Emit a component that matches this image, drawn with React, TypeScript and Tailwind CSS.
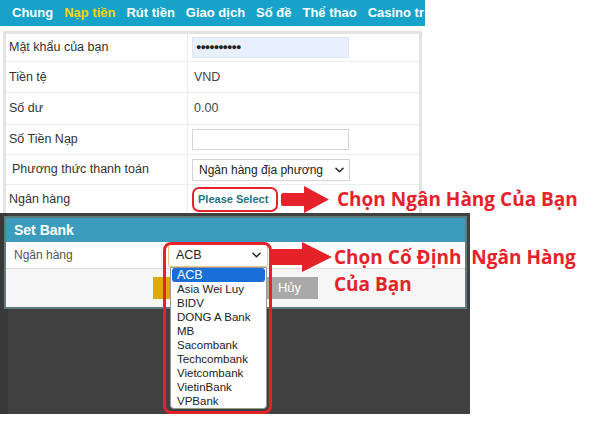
import React from "react";

const RED = "#e5222a";

function Chevron({ className }: { className?: string }) {
  return (
    <svg viewBox="0 0 10 6" className={className} fill="none">
      <path d="M1 1l4 4 4-4" stroke="#222" strokeWidth="1.6" strokeLinecap="round" strokeLinejoin="round" />
    </svg>
  );
}

function Row({ label, h, children, indent }: { label: string; h: string; children?: React.ReactNode; indent?: boolean }) {
  return (
    <div className={`flex border-b border-[#eeeeee] ${h}`}>
      <div className={`w-[182px] shrink-0 flex items-center border-r border-[#eeeeee] text-[12.5px] text-[#333] ${indent ? "pl-[6px]" : "pl-[3px]"}`}>
        {label}
      </div>
      <div className="flex items-center pl-[4px] text-[12.5px] text-[#444]">{children}</div>
    </div>
  );
}

export default function App() {
  const banks = ["ACB", "Asia Wei Luy", "BIDV", "DONG A Bank", "MB", "Sacombank", "Techcombank", "Vietcombank", "VietinBank", "VPBank"];
  return (
    <div className="relative w-[600px] h-[427px] overflow-hidden bg-white font-['Liberation_Sans',Arial,sans-serif]">
      {/* nav */}
      <div className="flex h-[26px] w-[425px] items-center gap-[11px] overflow-hidden whitespace-nowrap bg-[#17a2c9] pl-[12px] text-[13px] font-bold text-white">
        <span>Chung</span>
        <span className="text-[#ffd400]">Nạp tiền</span>
        <span>Rút tiền</span>
        <span>Giao dịch</span>
        <span>Số đề</span>
        <span>Thể thao</span>
        <span>Casino tr</span>
      </div>

      {/* form panel */}
      <div className="ml-[3px] mt-[5px] w-[419px] border-[3px] border-b-0 border-[#e3e3e3]">
        <Row label="Mật khẩu của bạn" h="h-[28px]">
          <div className="flex h-[21px] w-[157px] items-center border border-[#dfe6f0] bg-[#e8f0fe] pl-[3px] text-[9px] tracking-[-1px] text-[#222]">
            ●●●●●●●●●●
          </div>
        </Row>
        <Row label="Tiền tệ" h="h-[31px]">
          <span className="pl-[2px]">VND</span>
        </Row>
        <Row label="Số dư" h="h-[32px]">
          <span className="pl-[2px]">0.00</span>
        </Row>
        <Row label="Số Tiền Nạp" h="h-[30px]">
          <div className="h-[21px] w-[157px] border border-[#d4d4d4] bg-white" />
        </Row>
        <Row label="Phương thức thanh toán" h="h-[30px]" indent>
          <div className="flex h-[22px] w-[158px] items-center justify-between border border-[#d4d4d4] bg-white pl-[6px] pr-[5px] text-[12px] text-[#222]">
            <span>Ngân hàng địa phương</span>
            <Chevron className="h-[6px] w-[9px]" />
          </div>
        </Row>
        <div className="flex h-[28px]">
          <div className="flex w-[182px] shrink-0 items-center border-r border-[#eeeeee] pl-[3px] text-[12.5px] text-[#333]">Ngân hàng</div>
          <div className="flex items-center pl-[10px] text-[11px] font-bold text-[#1d7585]">Please Select</div>
        </div>
      </div>

      {/* dark overlay with modal */}
      <div className="h-[201px] w-[470px] bg-[linear-gradient(to_right,#393939_8px,#414141_8px)] pl-[4px] pt-[3px]">
        <div className="w-[463px] border-2 border-[#5f7b7d] bg-white">
          <div className="flex h-[24px] items-center bg-[#3b9cbd] pl-[8px] text-[14px] font-bold text-white">Set Bank</div>
          <div className="flex h-[27px] border-b border-[#dcdcdc]">
            <div className="flex w-[156px] shrink-0 items-center border-r border-[#e8e8e8] pl-[8px] text-[12px] text-[#555]">Ngân hàng</div>
            <div className="relative flex items-center pl-[6px]">
              <div className="flex h-[24px] w-[100px] items-center justify-between rounded-[2px] border border-[#e9c982] bg-white pl-[7px] pr-[6px] text-[12.5px] text-[#222]">
                <span>ACB</span>
                <Chevron className="h-[6px] w-[9px]" />
              </div>
              <div className="absolute left-[8px] top-[25px] z-10 w-[97px] rounded-b-[4px] border border-[#9a9a9a] bg-white px-[1px] text-[11.5px] leading-[14px] text-[#222]">
                {banks.map((b, i) => (
                  <div key={b} className={i === 0 ? "rounded-[3px] bg-[#1a6ed8] pl-[5px] text-[12.5px] text-white" : "pl-[5px]"}>
                    {b}
                  </div>
                ))}
              </div>
            </div>
          </div>
          <div className="flex h-[38px] gap-[5px] bg-[#f6f6f6] pl-[147px] pt-[8px]">
            <div className="h-[22px] w-[97px] bg-[#e0a90a]" />
            <div className="flex h-[22px] w-[63px] items-center justify-center bg-[#a9a9a9] pl-[6px] text-[13px] text-white">Hủy</div>
          </div>
        </div>
      </div>

      {/* annotations */}
      <div className="absolute left-[192px] top-[187px] h-[25px] w-[86px] rounded-[7px] border-[2.5px] border-[#e5222a]" />
      <svg className="absolute left-[281px] top-[186px]" width="48" height="27" viewBox="0 0 48 27">
        <path d="M2 7h21V0l25 13.5L23 27v-7H2a2 2 0 0 1-2-2V9a2 2 0 0 1 2-2z" fill={RED} />
      </svg>
      <div className="absolute left-[337px] top-[186px] whitespace-nowrap font-['Open_Sans',sans-serif] text-[19px] font-bold leading-[26px] text-[#e5222a]">
        Chọn Ngân Hàng Của Bạn
      </div>

      <div className="absolute left-[163px] top-[242px] z-20 h-[172px] w-[109px] rounded-[8px] border-[3px] border-[#e5222a]" />
      <svg className="absolute left-[272px] top-[242px]" width="60" height="30" viewBox="0 0 60 30">
        <path d="M0 7h30V0l30 15-30 15v-7H0z" fill={RED} />
      </svg>
      <div className="absolute left-[334px] top-[244px] whitespace-pre font-['Open_Sans',sans-serif] text-[19px] font-bold leading-[27px] text-[#e5222a]">
        {"Chọn Cố Định  Ngân Hàng\nCủa Bạn"}
      </div>
    </div>
  );
}
